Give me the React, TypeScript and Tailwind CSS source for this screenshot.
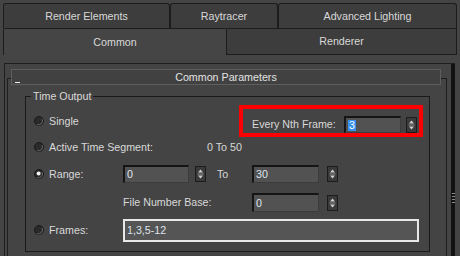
import React from "react";

const Spinner = () => (
  <svg width="11" height="16" viewBox="0 0 11 16" className="shrink-0">
    <rect x="0.5" y="0.5" width="10" height="15" fill="#3a3a3a" stroke="#1c1c1c" />
    <path d="M5.5 3.5 L8 6.5 L3 6.5 Z" fill="#d0d0d0" />
    <line x1="2.5" y1="8" x2="8.5" y2="8" stroke="#8c8c8c" />
    <path d="M3 9.5 L8 9.5 L5.5 12.5 Z" fill="#d0d0d0" />
  </svg>
);

const Radio = ({ on = false }: { on?: boolean }) => (
  <svg width="10" height="10" viewBox="0 0 10 10" className="shrink-0">
    <circle cx="5" cy="5" r="4.5" fill="#2a2a2a" stroke="#1a1a1a" />
    <path d="M8.2 3.2 A4 4 0 0 1 3.2 8.6" fill="none" stroke="#6e6e6e" strokeWidth="1" />
    {on && <circle cx="4.6" cy="4.6" r="2" fill="#f2f2f2" />}
  </svg>
);

const Field = ({ w, h = 18, children }: { w: string; h?: number; children?: React.ReactNode }) => (
  <div
    className={`${w} flex items-center border-t-2 border-l-2 border-r border-b border-t-[#151515] border-l-[#151515] border-r-[#3c3c3c] border-b-[#3c3c3c] bg-[#525252] pl-[2px] text-[#dde4ee]`}
    style={{ height: h }}
  >
    {children}
  </div>
);

export default function App() {
  return (
    <div className="w-[460px] h-[256px] bg-[#444444] overflow-hidden font-['Liberation_Sans',Arial,sans-serif] text-[10.7px] leading-none text-[#d8d8d8]">
      {/* tab row 1 */}
      <div className="flex pt-[3px] pl-[3px] h-[28px]">
        <div className="w-[167px] h-[25px] flex items-center justify-center bg-[#3d3d3d] border-t border-l border-r border-[#1c1c1c] rounded-t-[3px]">
          Render Elements
        </div>
        <div className="w-[108px] h-[25px] flex items-center justify-center bg-[#3d3d3d] border-t border-l border-r border-[#1c1c1c] rounded-t-[3px]">
          Raytracer
        </div>
        <div className="w-[179px] h-[25px] flex items-center justify-center bg-[#3d3d3d] border-t border-l border-r border-[#1c1c1c] rounded-t-[3px]">
          Advanced Lighting
        </div>
      </div>
      {/* tab row 2 */}
      <div className="flex pl-[3px] h-[27px]">
        <div className="w-[224px] h-[27px] flex items-center justify-center bg-[#454545] border-t border-l border-r border-[#1c1c1c] rounded-t-[2px]">
          Common
        </div>
        <div className="w-[230px] h-[27px] flex items-center justify-center bg-[#3d3d3d] border-t border-r border-b border-[#1c1c1c]">
          Renderer
        </div>
      </div>

      {/* scroll frame */}
      <div className="mt-[8px] ml-[4px] w-[451px] h-[200px] flex border-t border-l border-[#1e1e1e]">
        <div className="w-[446px] pt-[5px]">
          {/* rollout header */}
          <div className="relative z-10 ml-[6px] w-[430px] h-[16px] bg-[#414141] border border-[#5e5e5e] flex items-center text-[#e2e2e2]">
            <div className="w-[5px] h-[1px] bg-[#f0f0f0] ml-[3px] mt-[10px] shrink-0" />
            <div className="flex-1 text-center pr-[8px]">Common Parameters</div>
          </div>
          {/* rollout body */}
          <div className="-mt-[7px] ml-[2px] w-[440px] h-[200px] border-t border-l border-r border-[#1e1e1e] pt-[17px]">
            {/* group box */}
            <div className="ml-[17px] w-[405px] h-[156px] border border-[#1a1a1a]">
              <div className="-mt-[7px] ml-[5px] px-[2px] w-fit h-[12px] leading-[12px] bg-[#444444]">
                Time Output
              </div>

              {/* row 1 */}
              <div className="mt-[3px] h-[32px] flex items-center">
                <div className="w-[213px] flex items-center pl-[8px] pt-[1px]">
                  <Radio />
                  <span className="ml-[5px]">Single</span>
                </div>
                <div className="w-[184px] h-[32px] border-4 border-[#ff0000] flex items-end pl-[9px]">
                  <div className="w-[92px] h-[17px] flex items-center">Every Nth Frame:</div>
                  <Field w="w-[57px]" h={17}>
                    <span className="bg-[#3390f0] text-white px-[1px] h-[11px] flex items-center">3</span>
                  </Field>
                  <div className="ml-[5px] h-[17px] flex items-center">
                    <Spinner />
                  </div>
                </div>
              </div>

              {/* row 2 */}
              <div className="mt-[1px] h-[18px] flex items-center">
                <div className="w-[181px] flex items-center pl-[8px]">
                  <Radio />
                  <span className="ml-[5px]">Active Time Segment:</span>
                </div>
                <span>0 To 50</span>
              </div>

              {/* row 3 */}
              <div className="mt-[9px] h-[18px] flex items-center">
                <div className="w-[97px] flex items-center pl-[8px]">
                  <Radio on />
                  <span className="ml-[5px]">Range:</span>
                </div>
                <Field w="w-[66px]">0</Field>
                <div className="ml-[6px]">
                  <Spinner />
                </div>
                <span className="ml-[11px] w-[35px]">To</span>
                <Field w="w-[67px]">30</Field>
                <div className="ml-[8px]">
                  <Spinner />
                </div>
              </div>

              {/* row 4 */}
              <div className="mt-[10px] h-[19px] flex items-center">
                <div className="w-[97px]" />
                <span className="w-[129px] pl-[0px]">File Number Base:</span>
                <Field w="w-[67px]" h={19}>0</Field>
                <div className="ml-[8px]">
                  <Spinner />
                </div>
              </div>

              {/* row 5 */}
              <div className="mt-[7px] h-[23px] flex items-center">
                <div className="w-[97px] flex items-center pl-[8px]">
                  <Radio />
                  <span className="ml-[5px]">Frames:</span>
                </div>
                <div className="w-[296px] h-[23px] border-2 border-[#e8e8e8] bg-[#555555] flex items-center pl-[2px] text-[#dde4ee]">
                  1,3,5-12
                </div>
              </div>
            </div>
          </div>
        </div>
        {/* scrollbar strip */}
        <div className="w-[4px] h-[200px] bg-[#121212] flex flex-col items-center">
          <div className="mt-[129px] flex flex-col gap-[2px]">
            <div className="w-[3px] h-[1px] bg-[#8a8a8a]" />
            <div className="w-[3px] h-[1px] bg-[#8a8a8a]" />
            <div className="w-[3px] h-[1px] bg-[#8a8a8a]" />
            <div className="w-[3px] h-[1px] bg-[#8a8a8a]" />
          </div>
        </div>
      </div>
    </div>
  );
}
